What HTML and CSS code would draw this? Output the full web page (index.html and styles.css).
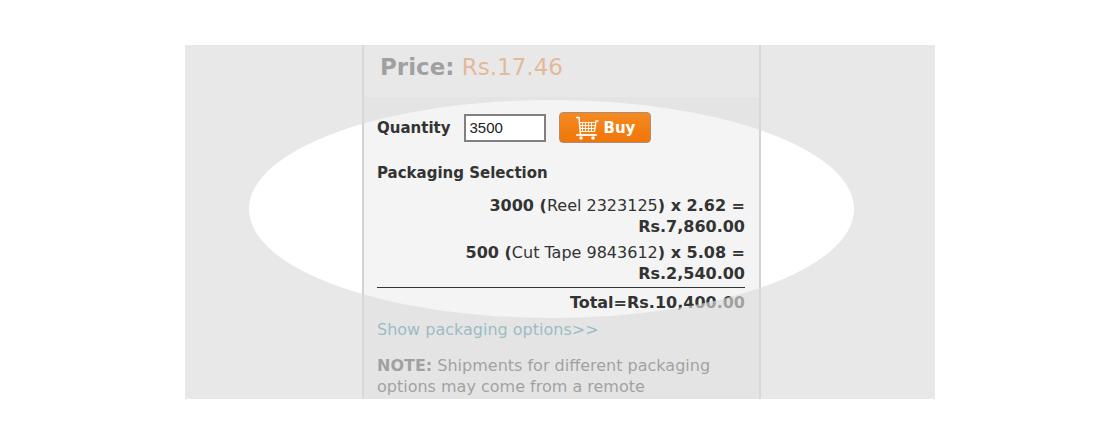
FILE: index.html
```html
<!DOCTYPE html>
<html lang="en">
<head>
    <meta charset="UTF-8">
    <meta name="viewport" content="width=device-width, initial-scale=1.0">
    <title>Packaging Selection</title>
    <link rel="stylesheet" href="styles.css">
</head>
<body>
    <main class="stage">
        <section class="panel">
            <div class="price"><strong>Price:</strong> <span class="amount">Rs.17.46</span></div>

            <div class="details">
                <form class="buy-form">
                    <label for="quantity">Quantity</label>
                    <input type="text" id="quantity" class="quantity" value="3500">
                    <button type="button" class="buy">
                        <svg class="cart" viewBox="0 0 24 24" aria-hidden="true">
                            <path d="M1 1.500h3l1.500 17.500H20" fill="none" stroke="#fff" stroke-width="1.500" stroke-linejoin="round"/>
                            <path d="M5 6.500h15.500M5 9.500h15M5 12.500h15M5 15.500h14.500" fill="none" stroke="#fff" stroke-width="0.900"/>
                            <path d="M7.500 6v10M10.500 6v10M13.500 6v10M16.500 6v10" fill="none" stroke="#fff" stroke-width="0.900"/>
                            <path d="M23.500 5h-2.500l-1.500 10.500" fill="none" stroke="#fff" stroke-width="1.300"/>
                            <path d="M1 19h21" fill="none" stroke="#fff" stroke-width="1.500"/>
                            <circle cx="6" cy="22" r="1.800" fill="#fff"/>
                            <circle cx="18" cy="22" r="1.800" fill="#fff"/>
                        </svg>
                        Buy
                    </button>
                </form>

                <h2>Packaging Selection</h2>
                <ul class="lines">
                    <li>3000 (<span>Reel 2323125</span>) x 2.62 = Rs.7,860.00</li>
                    <li>500 (<span>Cut Tape 9843612</span>) x 5.08 = Rs.2,540.00</li>
                </ul>
                <div class="total">Total=Rs.10,400.00</div>

                <a class="options" href="#options">Show packaging options&gt;&gt;</a>
                <p class="note"><strong>NOTE:</strong> Shipments for different packaging options may come from a remote</p>
            </div>
        </section>
        <div class="spotlight"></div>
    </main>
</body>
</html>
```
FILE: styles.css
```css
* { box-sizing: border-box; }
body {
    margin: 0; padding: 45px 20px; background: #fff; color: #333;
    font-family: Verdana, "DejaVu Sans", sans-serif;
    font-size: 16px; line-height: 21px;
}
.stage {
    position: relative; overflow: hidden;
    display: flex; justify-content: center;
    max-width: 750px; margin: 0 auto; padding-left: 3px;
}
.panel {
    width: 100%; max-width: 399px;
    border: solid #d2d2d2; border-width: 0 2px;
}
.price { padding: 7px 16px 15px; font-size: 23px; line-height: 30px; background: #fff; }
.amount { color: #f07818; }
.details { padding: 15px 14px 2px 13px; background: #f4f4f4; }

.buy-form { display: flex; align-items: center; gap: 13px; margin-bottom: 20px; }
.buy-form label { padding-top: 2px; font-size: 15px; font-weight: bold; }
.quantity {
    width: 82px; height: 28px; padding: 0 4px;
    border: 2px solid #808080; background: #fff; color: #222;
    font-family: "Liberation Sans", Arial, sans-serif; font-size: 15px;
}
.buy {
    display: flex; align-items: center; gap: 5px;
    height: 31px; padding: 0 15px;
    border: 1px solid #a98f78; border-radius: 4px;
    background: linear-gradient(#f58a22, #ef7609); color: #fff;
    font-family: inherit; font-size: 15px; font-weight: bold; cursor: pointer;
}
.cart { width: 24px; height: 24px; }

h2 { margin: 0 0 11px; font-size: 15px; line-height: 21px; }
.lines { margin: 0; padding: 0 0 3px; list-style: none; border-bottom: 1px solid #333; }
.lines li { margin-bottom: 5px; padding-left: 60px; text-align: right; font-weight: bold; }
.lines li:last-child { margin-bottom: 0; }
.lines span { font-weight: normal; }
.total { padding: 4px 0 6px; text-align: right; font-weight: bold; }
.options { display: block; color: #1c8296; text-decoration: none; }
.note { margin: 15px 0 0; }

/* dims everything outside the ellipse */
.spotlight {
    position: absolute; top: 55px; right: 81px; left: 64px;
    height: 218px; border-radius: 50%;
    box-shadow: 0 0 0 999px rgba(220, 220, 220, 0.65);
    pointer-events: none;
}
```
